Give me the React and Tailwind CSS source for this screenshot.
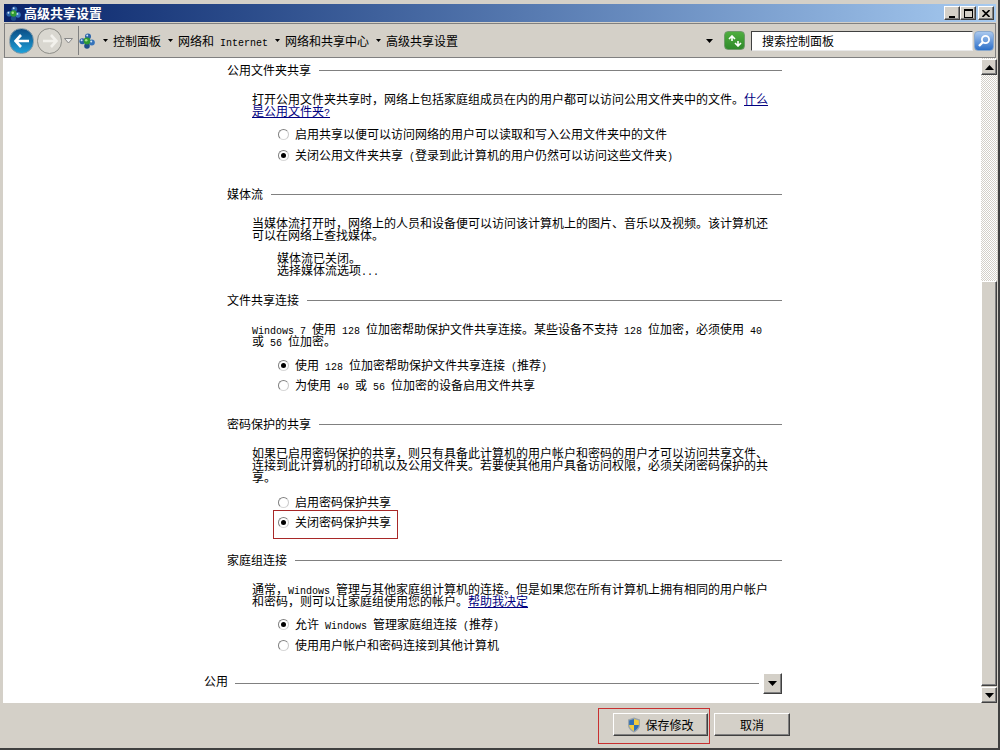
import React from 'react';

const cjk = "font-['Noto_Sans_CJK_SC','Liberation_Mono',monospace]";

// latin runs in the picture are 6px per char, like SimSun at 12px
const L = ({ children }) => (
  <span className="font-['Liberation_Mono',monospace] text-[10px] leading-[0px]">{children}</span>
);

const Heading = ({ children, className = '' }) => (
  <div className={`flex h-3 items-center gap-2 pl-[227px] pr-[199px] ${className}`}>
    <span className="whitespace-nowrap">{children}</span>
    <div className="h-px flex-1 bg-[#808080]" />
  </div>
);

const Para = ({ children, className = '' }) => (
  <p className={`ml-[252px] w-[522px] text-[12px] leading-[12px] ${className}`}>{children}</p>
);

const Radio = ({ checked, children, className = '' }) => (
  <div className={`ml-[278px] flex h-3 items-center gap-[6px] whitespace-nowrap ${className}`}>
    <span className="flex h-[11px] w-[11px] items-center justify-center rounded-full border border-[#808080] border-r-[#c8c8c8] border-b-[#d8d8d8] bg-white">
      {checked && <span className="h-[5px] w-[5px] rounded-full bg-black" />}
    </span>
    <span>{children}</span>
  </div>
);

const Bevel = ({ className = '', children }) => (
  <div className={`flex items-center justify-center border border-t-white border-l-white border-r-[#404040] border-b-[#404040] bg-[#d4d0c8] shadow-[inset_-1px_-1px_0_#808080] ${className}`}>
    {children}
  </div>
);

const Tri = ({ up }) => (
  <svg width="9" height="5" viewBox="0 0 9 5">
    <path d={up ? 'M4.5 0L9 5H0z' : 'M0 0h9L4.5 5z'} fill="#000" />
  </svg>
);

const NetIcon = ({ size = 16 }) => (
  <svg width={size} height={size} viewBox="0 0 16 16">
    <circle cx="9" cy="3.4" r="3" fill="#2a62a8" />
    <circle cx="3.4" cy="8.2" r="3" fill="#2a62a8" />
    <circle cx="12.8" cy="9.4" r="3" fill="#3573bb" />
    <circle cx="8" cy="13" r="2.8" fill="#1f4f8a" />
    <circle cx="8" cy="8" r="3.4" fill="#2f9a34" />
    <circle cx="7.2" cy="7.2" r="1.3" fill="#a8e08a" />
    <circle cx="8.2" cy="2.4" r="1" fill="#cfe4f8" />
    <circle cx="2.6" cy="7.2" r="1" fill="#cfe4f8" />
    <circle cx="12.2" cy="8.4" r="1" fill="#cfe4f8" />
  </svg>
);

const Crumb = ({ children }) => (
  <div className="flex items-center gap-[5px] whitespace-nowrap">
    <svg width="5" height="3" viewBox="0 0 5 3"><path d="M0 0h5L2.5 3z" fill="#000" /></svg>
    <span>{children}</span>
  </div>
);

const Arrow = ({ className = '', color }) => (
  <svg className={className} width="16" height="14" viewBox="0 0 16 14">
    <path d="M7 1L1.5 7 7 13M2 7h13" fill="none" stroke={color} strokeWidth="2.6" />
  </svg>
);

export default function App() {
  return (
    <div className={`flex h-[750px] w-[1000px] flex-col overflow-hidden border-b-2 border-r-2 border-b-[#404040] border-r-[#404040] bg-[#d4d0c8] pl-1 pt-1 text-[12px] leading-[12px] text-black ${cjk}`}>
      {/* title bar */}
      <div className="mr-[2px] flex h-[18px] items-center bg-gradient-to-r from-[#0a246a] to-[#a6caf0] pl-[2px] pr-[2px]">
        <NetIcon size={15} />
        <span className="ml-[3px] text-[13px] font-bold text-white">高级共享设置</span>
        <div className="ml-auto flex">
          <Bevel className="h-[14px] w-4"><span className="mt-[7px] h-[2px] w-[6px] bg-black" /></Bevel>
          <Bevel className="h-[14px] w-4"><span className="h-[9px] w-[9px] border border-t-2 border-black" /></Bevel>
          <Bevel className="ml-[2px] h-[14px] w-4">
            <svg width="8" height="7" viewBox="0 0 8 7"><path d="M0.5 0L7.5 7M7.5 0L0.5 7" stroke="#000" strokeWidth="1.6" /></svg>
          </Bevel>
        </div>
      </div>

      {/* address bar */}
      <div className="mr-[2px] mt-[1px] flex h-[35px] items-center border border-[#808080] bg-[#d4d0c8] pl-1 pr-px">
        <div className="flex h-[26px] w-[25px] items-center justify-center rounded-full border border-[#7f98a8] bg-gradient-to-b from-[#0b4e86] to-[#1fa0d8]">
          <Arrow color="#fff" />
        </div>
        <div className="ml-[3px] flex h-[26px] w-[25px] items-center justify-center rounded-full border border-[#8d8d88] bg-[#d9d7d0]">
          <Arrow color="#f2f1ec" className="rotate-180" />
        </div>
        <svg className="ml-[2px]" width="9" height="6" viewBox="0 0 9 6"><path d="M0.5 0.5h8L4.5 5z" fill="#eee" stroke="#888" /></svg>
        <div className="ml-[5px] flex h-[29px] flex-1 items-center border-l border-[#808080]">
          <NetIcon />
          <div className="ml-2 flex items-center gap-[7px]">
            <Crumb>控制面板</Crumb>
            <Crumb>网络和<L> Internet</L></Crumb>
            <Crumb>网络和共享中心</Crumb>
            <Crumb>高级共享设置</Crumb>
          </div>
          <svg className="ml-auto mr-[11px]" width="7" height="4" viewBox="0 0 7 4"><path d="M0 0h7L3.5 4z" fill="#000" /></svg>
        </div>
        <div className="flex h-[19px] w-[21px] items-center justify-center rounded-sm border border-[#6f9a6a] bg-gradient-to-b from-[#4fae3f] to-[#2f8a2a]">
          <svg width="14" height="12" viewBox="0 0 14 12"><path d="M1 4l3-3 3 3M4 1v5M7 8l3 3 3-3M10 11V6" fill="none" stroke="#fff" strokeWidth="1.6" transform="rotate(180 7 6)" /></svg>
        </div>
        <div className="ml-[6px] flex h-5 w-[222px] items-center border border-t-[#404040] border-l-[#404040] border-r-[#e8e8e8] border-b-[#e8e8e8] bg-white pl-[10px]">搜索控制面板</div>
        <div className="ml-[1px] flex h-5 w-5 items-center justify-center rounded-sm border border-[#8aa8cc] bg-gradient-to-b from-[#a9c8ee] to-[#2a6fc8]">
          <svg width="14" height="14" viewBox="0 0 14 14"><circle cx="8.5" cy="5.5" r="3.6" fill="none" stroke="#fff" strokeWidth="1.8" /><path d="M6 8L2 12" stroke="#fff" strokeWidth="2.4" /></svg>
        </div>
      </div>

      {/* content */}
      <div className="-ml-px mr-[1px] flex h-[645px] bg-white">
        <div className="relative -ml-[3px] flex-1 pt-[6px]">
          <Heading>公用文件夹共享</Heading>
          <Para className="mt-[17px]">打开公用文件夹共享时，网络上包括家庭组成员在内的用户都可以访问公用文件夹中的文件。<a className="text-[#000080] underline">什么是公用文件夹<L>?</L></a></Para>
          <Radio className="mt-[11px]">启用共享以便可以访问网络的用户可以读取和写入公用文件夹中的文件</Radio>
          <Radio checked className="mt-[9px]">关闭公用文件夹共享<L> (</L>登录到此计算机的用户仍然可以访问这些文件夹<L>)</L></Radio>

          <Heading className="mt-[27px]">媒体流</Heading>
          <Para className="mt-[17px]">当媒体流打开时，网络上的人员和设备便可以访问该计算机上的图片、音乐以及视频。该计算机还可以在网络上查找媒体。</Para>
          <div className="ml-[277px] mt-[11px]">媒体流已关闭。</div>
          <div className="ml-[277px]">选择媒体流选项<L>...</L></div>

          <Heading className="mt-[18px]">文件共享连接</Heading>
          <Para className="mt-[17px]"><L>Windows 7 </L>使用<L> 128 </L>位加密帮助保护文件共享连接。某些设备不支持<L> 128 </L>位加密，必须使用<L> 40 </L>或<L> 56 </L>位加密。</Para>
          <Radio checked className="mt-[12px]">使用<L> 128 </L>位加密帮助保护文件共享连接<L> (</L>推荐<L>)</L></Radio>
          <Radio className="mt-[8px]">为使用<L> 40 </L>或<L> 56 </L>位加密的设备启用文件共享</Radio>

          <Heading className="mt-[27px]">密码保护的共享</Heading>
          <Para className="mt-[17px]">如果已启用密码保护的共享，则只有具备此计算机的用户帐户和密码的用户才可以访问共享文件、连接到此计算机的打印机以及公用文件夹。若要使其他用户具备访问权限，必须关闭密码保护的共享。</Para>
          <Radio className="mt-[13px]">启用密码保护共享</Radio>
          <Radio checked className="mt-[8px]">关闭密码保护共享</Radio>

          <Heading className="mt-[26px]">家庭组连接</Heading>
          <Para className="mt-[17px]">通常，<L>Windows </L>管理与其他家庭组计算机的连接。但是如果您在所有计算机上拥有相同的用户帐户和密码，则可以让家庭组使用您的帐户。<a className="text-[#000080] underline">帮助我决定</a></Para>
          <Radio checked className="mt-[11px]">允许<L> Windows </L>管理家庭组连接<L> (</L>推荐<L>)</L></Radio>
          <Radio className="mt-[9px]">使用用户帐户和密码连接到其他计算机</Radio>

          <div className="mt-[22px] flex h-[21px] items-center pl-[204px] pr-[199px]">
            <span className="-mt-[5px]">公用</span>
            <div className="ml-[7px] h-px flex-1 bg-[#808080]" />
            <Bevel className="ml-1 h-[21px] w-[19px]"><Tri /></Bevel>
          </div>

          {/* red highlight */}
          <div className="absolute left-[273px] top-[452px] h-[29px] w-[125px] border border-[#a82828]" />
        </div>

        {/* scrollbar */}
        <div className="flex w-4 flex-col bg-[repeating-conic-gradient(#d4d0c8_0_25%,#ffffff_0_50%)] bg-[length:2px_2px] pt-px">
          <Bevel className="h-4 w-4"><Tri up /></Bevel>
          <div className="h-[206px]" />
          <Bevel className="w-4 flex-1" />
          <div className="h-px bg-[#d4d0c8]" />
          <Bevel className="h-4 w-4"><Tri /></Bevel>
        </div>
      </div>

      {/* footer */}
      <div className="relative flex flex-1 items-start justify-end pr-[208px] pt-[10px]">
        <div className="flex gap-[6px]">
          <Bevel className="h-[23px] w-[95px] gap-[4px]">
            <svg width="14" height="16" viewBox="0 0 14 16">
              <path d="M7 0.5L13 2.5V8c0 3.5-3 6-6 7.5C4 14 1 11.5 1 8V2.5z" fill="#9aa4ac" />
              <path d="M7 2L11.8 3.5V8H7z" fill="#f0cb3c" />
              <path d="M7 2L2.2 3.5V8H7z" fill="#2f6fb5" />
              <path d="M7 8H11.8C11.6 10.8 9.4 12.8 7 14z" fill="#2f6fb5" />
              <path d="M7 8H2.2C2.4 10.8 4.6 12.8 7 14z" fill="#f0cb3c" />
            </svg>
            <span>保存修改</span>
          </Bevel>
          <Bevel className="h-[23px] w-[76px]">取消</Bevel>
        </div>
        <div className="absolute left-[594px] top-[5px] h-[36px] w-[112px] border border-[#c83030]" />
      </div>
    </div>
  );
}
